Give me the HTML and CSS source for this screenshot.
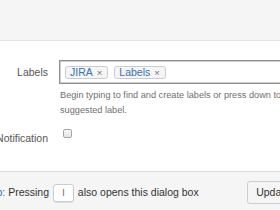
FILE: index.html
```html
<!DOCTYPE html>
<html lang="en">
<head>
  <meta charset="UTF-8">
  <title>Labels</title>
  <link rel="stylesheet" href="styles.css">
</head>
<body>
  <div class="dialog">
    <div class="dialog-top"></div>

    <form class="labels-form">
      <div class="field-row">
        <label class="field-label" for="labels-input">Labels</label>
        <div class="field-body">
          <div class="multi-select">
            <span class="tag">JIRA<span class="tag-remove">&times;</span></span>
            <span class="tag">Labels<span class="tag-remove">&times;</span></span>
            <input id="labels-input" class="tag-input" type="text">
          </div>
          <p class="help">Begin typing to find and create labels or press down to select a suggested label.</p>
        </div>
      </div>

      <div class="field-row notify-row">
        <label class="field-label" for="notify">Send Notification</label>
        <div class="field-body">
          <input id="notify" class="checkbox" type="checkbox">
        </div>
      </div>
    </form>

    <div class="dialog-footer">
      <p class="hint"><span class="hint-title">Pro tip:</span> Pressing <kbd class="key">l</kbd> also opens this dialog box</p>
      <button class="button" type="button">Update</button>
    </div>
  </div>
</body>
</html>
```

FILE: styles.css
```css
body {
  margin: 0;
  overflow: hidden;
  font-family: "Liberation Sans", Arial, sans-serif;
  font-size: 10.5px;
  line-height: 15px;
  color: #333;
  background: #fff;
}

.dialog {
  width: 345px;
  margin-left: -36px;
}

.dialog-top {
  height: 40px;
  background: #f5f5f5;
  border-bottom: 1px solid #e4e4e4;
}

/* form rows */
.labels-form {
  padding-top: 19px;
  padding-bottom: 25px;
}

.field-row {
  display: grid;
  grid-template-columns: 84px 1fr;
  column-gap: 11px;
}

.field-label {
  text-align: right;
  color: #555;
  white-space: nowrap;
  padding-top: 5px;
}

.multi-select {
  display: flex;
  align-items: center;
  gap: 6px;
  height: 22px;
  padding: 0 5px;
  border: 1px solid #8f8f8f;
  box-shadow: inset 0 0 0 1px #d0d0d0;
  background: #fff;
}

.tag {
  display: inline-flex;
  align-items: center;
  height: 11px;
  padding: 0 5px 0 4px;
  border: 1px solid #ccc;
  border-radius: 3px;
  background: #f5f5f5;
  color: #3572b0;
  line-height: 11px;
}

.tag-remove {
  margin-left: 4px;
  color: #707070;
  font-size: 9.5px;
}

.tag-input {
  flex: 1;
  min-width: 0;
  border: 0;
  outline: none;
  font: inherit;
  padding: 0;
}

.help {
  margin: 4px 0 0 1px;
  width: 300px;
  font-size: 9.2px;
  color: #707070;
}

.notify-row {
  margin-top: 8px;
}

.checkbox {
  appearance: none;
  display: block;
  width: 9px;
  height: 9px;
  margin: 3px 0 0 4px;
  border: 1px solid #a5a5a5;
  border-radius: 2px;
  background: linear-gradient(#f8f8f8, #e4e4e4);
}

/* footer */
.dialog-footer {
  display: flex;
  align-items: center;
  padding: 9px 10px 10px;
  border-top: 1px solid #dcdcdc;
  background: #f5f5f5;
}

.hint {
  margin: 0 0 0 -2px;
  white-space: nowrap;
}

.hint-title {
  color: #3572b0;
}

.key {
  display: inline-block;
  width: 19px;
  height: 16px;
  margin: 0 1px;
  border: 1px solid #ccc;
  border-radius: 3px;
  background: #fff;
  box-shadow: 0 1px 0 #e0e0e0;
  font-family: "Liberation Sans", Arial, sans-serif;
  font-size: 9px;
  line-height: 16px;
  text-align: center;
  color: #555;
  vertical-align: middle;
}

.button {
  margin-left: auto;
  height: 23px;
  padding: 0 8px;
  border: 1px solid #ccc;
  border-radius: 3px;
  background: #f5f5f5;
  font: inherit;
  color: #333;
}
```
